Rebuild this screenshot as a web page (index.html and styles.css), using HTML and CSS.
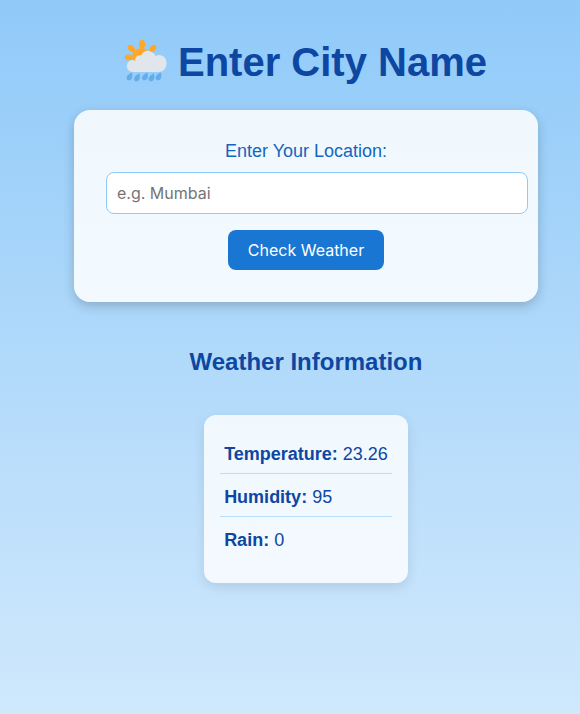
FILE: index.html
```html
<!DOCTYPE html>
<html lang="en">
<head>
<meta charset="utf-8">
<meta name="viewport" content="width=device-width, initial-scale=1">
<title>Enter City Name</title>
<link rel="stylesheet" href="styles.css">
</head>
<body>
<main class="page">
  <h1 class="title">
    <svg class="title-icon" viewBox="0 0 42 42" aria-hidden="true">
      <g fill="#ffa726">
        <ellipse cx="17" cy="4.300" rx="3" ry="4.300"/>
        <ellipse cx="6.300" cy="8.500" rx="2.900" ry="4.200" transform="rotate(-45 6.300 8.500)"/>
        <ellipse cx="27.700" cy="8.500" rx="2.900" ry="4.200" transform="rotate(45 27.700 8.500)"/>
        <ellipse cx="3.600" cy="17.300" rx="4" ry="2.900"/>
        <circle cx="16.500" cy="17.500" r="9.500"/>
      </g>
      <path fill="#e0e6eb" d="M8 32C4.300 32 1.800 29 1.800 26S4.300 20 7.500 20C8.600 20 9.500 20.300 10.300 20.800C9.900 17 12.500 14.800 16 15.200C18 11.700 22 9.700 25.800 11.500C28.500 12.700 30 14.200 30.500 16C36.500 12.900 41.800 17.500 41.600 23.500C41.400 28.500 38 32 33 32Z"/>
      <g fill="#64adeb">
        <path id="drop" d="M6.900 32.500C4.300 33.300 1.600 35.800 1.600 38C1.600 39.800 3 40.500 4.300 40.300C7.300 40 8 36.200 6.900 32.500Z"/>
        <use href="#drop" x="7.500" y="1"/>
        <use href="#drop" x="15.500"/>
        <use href="#drop" x="22" y="1"/>
        <use href="#drop" x="29"/>
      </g>
    </svg>
    <span>Enter City Name</span>
  </h1>

  <form class="search-card">
    <label class="search-label" for="city">Enter Your Location:</label>
    <input class="search-input" id="city" name="city" type="text" placeholder="e.g. Mumbai">
    <button class="search-button" type="button">Check Weather</button>
  </form>

  <h2 class="subtitle">Weather Information</h2>

  <section class="info-card">
    <p class="info-row"><strong>Temperature:</strong> 23.26</p>
    <p class="info-row"><strong>Humidity:</strong> 95</p>
    <p class="info-row"><strong>Rain:</strong> 0</p>
  </section>
</main>
</body>
</html>
```
FILE: styles.css
```css
html {
  min-height: 100%;
  background: linear-gradient(to bottom, #90caf9 0%, #bbdefb 66%, #e3f2fd 133%);
}

body {
  margin: 0;
  color: #0d47a1;
  font-family: "Nimbus Sans", "Liberation Sans", Arial, sans-serif;
}

.page {
  display: flex;
  flex-direction: column;
  align-items: center;
  padding: 39px 0 32px 32px;
}

.title {
  display: flex;
  align-items: center;
  gap: 11px;
  margin: 0 0 25px;
  font-size: 40px;
  line-height: 46px;
}

.title-icon {
  width: 42px;
  height: 42px;
  margin-bottom: 2px;
}

.search-card {
  box-sizing: border-box;
  display: flex;
  flex-direction: column;
  align-items: center;
  width: 85%;
  max-width: 464px;
  padding: 30px 10px 32px 32px;
  border-radius: 16px;
  background: rgba(255, 255, 255, 0.85);
  box-shadow: 0 4px 12px rgba(0, 0, 0, 0.2);
}

.search-label,
.search-button {
  margin-right: 22px;
}

.search-label {
  color: #1565c0;
  font-size: 18px;
  line-height: 22px;
}

.search-input {
  box-sizing: border-box;
  width: 100%;
  height: 42px;
  margin: 10px 0 16px;
  padding: 10px;
  border: 1px solid #90caf9;
  border-radius: 8px;
  background: #fff;
  font-family: Inter, sans-serif;
  font-size: 16px;
}

.search-input::placeholder {
  color: #757575;
}

.search-button {
  height: 40px;
  padding: 0 20px;
  border: 0;
  border-radius: 8px;
  background: #1976d2;
  color: #fff;
  font-family: Inter, sans-serif;
  font-size: 16px;
  cursor: pointer;
}

.subtitle {
  margin: 46px 0 40px;
  font-size: 24px;
  line-height: 27px;
}

.info-card {
  padding: 16px 16px 24px;
  border-radius: 12px;
  background: rgba(255, 255, 255, 0.8);
  box-shadow: 0 4px 12px rgba(0, 0, 0, 0.1);
}

.info-row {
  margin: 0;
  padding: 13px 4px 9px;
  border-bottom: 1px solid #bbdefb;
  font-size: 18px;
  line-height: 20px;
}

.info-row:last-child {
  border-bottom: 0;
}
```
